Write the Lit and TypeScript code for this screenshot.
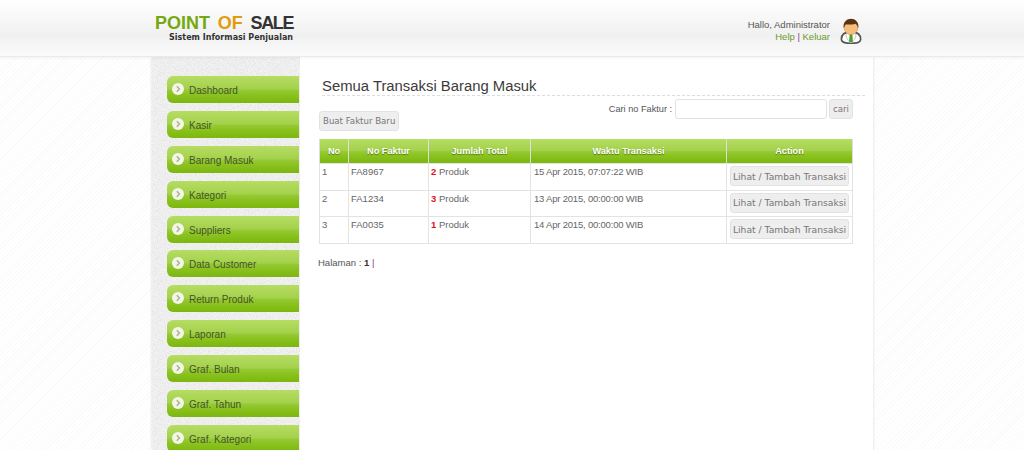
import { LitElement, css, html, unsafeCSS } from "lit";
import { customElement } from "lit/decorators.js";

const menu = ["Dashboard", "Kasir", "Barang Masuk", "Kategori", "Suppliers", "Data Customer", "Return Produk", "Laporan", "Graf. Bulan", "Graf. Tahun", "Graf. Kategori"];

const rows = [
  { no: 1, faktur: "FA8967", total: 2, waktu: "15 Apr 2015, 07:07:22 WIB" },
  { no: 2, faktur: "FA1234", total: 3, waktu: "13 Apr 2015, 00:00:00 WIB" },
  { no: 3, faktur: "FA0035", total: 1, waktu: "14 Apr 2015, 00:00:00 WIB" },
];

const noise = unsafeCSS(
  `url("data:image/svg+xml,%3Csvg xmlns='http://www.w3.org/2000/svg' width='160' height='160'%3E%3Cfilter id='n'%3E%3CfeTurbulence type='fractalNoise' baseFrequency='1.1' numOctaves='2'/%3E%3CfeColorMatrix values='0 0 0 0 0.6 0 0 0 0 0.6 0 0 0 0 0.6 0.9 0 0 0 -0.3'/%3E%3C/filter%3E%3Crect width='160' height='160' fill='%23f4f4f4'/%3E%3Crect width='160' height='160' filter='url(%23n)'/%3E%3C/svg%3E")`
);

@customElement("app-root")
export class AppRoot extends LitElement {
  static styles = css`
    :host {
      display: block;
      height: 450px;
      overflow: hidden;
      font-family: "Liberation Sans", Arial, sans-serif;
      font-size: 9.5px;
      color: #666;
      background: repeating-linear-gradient(135deg, #fff 0 2px, #fafafa 2px 3px);
    }
    .header {
      height: 57px;
      box-sizing: border-box;
      padding: 0 162px 0 155px;
      display: flex;
      justify-content: space-between;
      background: linear-gradient(#fff 0, #f2f2f2 55%, #f0f0f0 62%, #fbfbfb 100%);
      border-bottom: 1px solid #eaeaea;
      box-shadow: 0 1px 3px rgba(0, 0, 0, 0.05);
      position: relative;
    }
    .logo {
      padding-top: 14px;
      width: 138px;
    }
    .logo-main {
      font: bold 18px/19px "Liberation Sans", Arial, sans-serif;
      white-space: nowrap;
      display: flex;
      justify-content: space-between;
      color: #333;
    }
    .logo-main .point { color: #74a90f; }
    .logo-main .of { color: #e09c0c; }
    .logo-main .sale { letter-spacing: -1.4px; }
    .logo-sub {
      font: bold 8px/9px "DejaVu Sans", sans-serif;
      color: #333;
      text-align: right;
      white-space: nowrap;
    }
    .user {
      display: flex;
      gap: 10px;
      padding-top: 18px;
    }
    .user-text {
      text-align: right;
      line-height: 12px;
      padding-top: 1px;
      color: #555;
    }
    .user-text a { color: #6d9a2c; }
    .user-text .sep { color: #8a3f8a; }
    .user svg { display: block; }
    .wrap {
      width: 721px;
      margin-left: 152px;
      display: flex;
      height: 393px;
      box-shadow: 0 0 3px rgba(0, 0, 0, 0.14);
    }
    .sidebar {
      width: 148px;
      box-sizing: border-box;
      padding: 19px 0 0 15px;
      display: flex;
      flex-direction: column;
      gap: 7.9px;
      flex: none;
      background: #efefef ${noise};
    }
    .item {
      height: 27px;
      box-sizing: border-box;
      padding: 2px 0 0 5px;
      flex: none;
      display: flex;
      align-items: center;
      gap: 5px;
      margin-right: 1px;
      border-radius: 6px 0 0 6px;
      background: linear-gradient(#b6dd62 0, #a4d14c 48%, #96ca36 52%, #8ac21f 70%, #7cb60f 100%);
      color: #46532c;
      font-size: 10px;
    }
    .item svg { display: block; margin-top: -3px; }
    .content {
      flex: 1;
      background: #fff;
      padding: 19px 20px 0 19px;
      min-width: 0;
    }
    h1 {
      margin: 0 -12px 0 3px;
      padding-top: 2px;
      font: normal 14.85px/17px "Liberation Sans", Arial, sans-serif;
      color: #3b3b3b;
      border-bottom: 1px dashed #ddd;
    }
    .tools {
      display: flex;
      justify-content: space-between;
      height: 40px;
      margin-top: 3px;
    }
    .new-btn { margin-top: 12px; }
    .btn {
      box-sizing: border-box;
      height: 20px;
      padding: 0 3px;
      display: inline-flex;
      align-items: center;
      background: #eee;
      border: 1px solid #e2e2e2;
      border-radius: 3px;
      font: 8.6px "DejaVu Sans", sans-serif;
      color: #777;
      white-space: nowrap;
    }
    .search {
      display: flex;
      align-items: flex-start;
      gap: 2px;
    }
    .search label { line-height: 20px; font-size: 9.2px; margin-right: 1px; color: #555; }
    .search .input {
      box-sizing: border-box;
      width: 152px;
      height: 20px;
      border: 1px solid #e2e2e2;
      border-radius: 3px;
      background: #fff;
    }
    table {
      width: 533px;
      table-layout: fixed;
      border-collapse: collapse;
    }
    th {
      height: 24px;
      padding: 0;
      border: 1px solid #ddd;
      border-width: 0 1px;
      background: linear-gradient(#b6dd62 0, #a4d14c 48%, #96ca36 52%, #8ac21f 70%, #7cb60f 100%);
      color: #fff;
      font: bold 9.2px "Liberation Sans", Arial, sans-serif;
      text-shadow: 0 1px 1px rgba(60, 90, 0, 0.7);
      text-align: center;
    }
    td {
      height: 26.5px;
      box-sizing: border-box;
      padding: 0 2px;
      border: 1px solid #e3e3e3;
      vertical-align: top;
      line-height: 15px;
    }
    td b { color: #e0141c; }
    td.date { letter-spacing: -0.2px; padding-left: 3px; }
    td.action { padding: 2px 3px 0 3px; }
    td.action .btn { width: 119px; justify-content: center; padding: 0; font-size: 9.2px; }
    .pager { margin: 13px 0 0 -1px; color: #555; }
    .pager b { color: #333; }
    .pager span { color: #8a3f8a; }
  `;

  render() {
    return html`
      <div class="header">
        <div class="logo">
          <div class="logo-main"><span class="point">POINT</span><span class="of">OF</span><span class="sale">SALE</span></div>
          <div class="logo-sub">Sistem Informasi Penjualan</div>
        </div>
        <div class="user">
          <div class="user-text">
            <div>Hallo, Administrator</div>
            <div><a>Help</a> <span class="sep">|</span> <a>Keluar</a></div>
          </div>
          <svg width="22" height="26" viewBox="0 0 24 28">
            <path d="M1.5 23c0-5 4-8 10.5-8s10.5 3 10.5 8c0 3-4 4.5-10.5 4.5S1.5 26 1.5 23z" fill="#fff" stroke="#555" stroke-width="1.8"/>
            <path d="M7.5 15.500l4.500 2 4.500-2 1 4c-1 3-3 6-5.500 7.500-2.500-1.500-4.500-4.500-5.500-7.500z" fill="#fff" stroke="#999" stroke-width=".6"/>
            <path d="M10.5 17h3l.5 9h-4z" fill="#49a32a"/>
            <ellipse cx="12" cy="10" rx="7.5" ry="8" fill="#f8bd78" stroke="#c88440" stroke-width=".6"/>
            <path d="M4.2 11C2.5 4 8 .5 12 .5s9.5 3.5 7.8 10.5c-.5-2.5-1.500-4-3-5C13 7.500 8 7 6.500 6.500 5.500 7.500 4.700 9 4.200 11z" fill="#5a3410"/>
          </svg>
        </div>
      </div>
      <div class="wrap">
        <div class="sidebar">
          ${menu.map(
            (m) => html`<div class="item">
              <svg width="12" height="12" viewBox="0 0 12 12">
                <circle cx="6" cy="6" r="6" fill="#f3f5e6"/>
                <path d="M4.8 3.3L7.4 6 4.8 8.7" fill="none" stroke="#a9b58c" stroke-width="1.5"/>
              </svg>
              ${m}
            </div>`
          )}
        </div>
        <div class="content">
          <h1>Semua Transaksi Barang Masuk</h1>
          <div class="tools">
            <div class="new-btn"><span class="btn">Buat Faktur Baru</span></div>
            <div class="search">
              <label>Cari no Faktur :</label>
              <div class="input"></div>
              <span class="btn">cari</span>
            </div>
          </div>
          <table>
            <colgroup>
              <col style="width:29px" /><col style="width:80px" /><col style="width:102px" /><col style="width:196px" /><col style="width:126px" />
            </colgroup>
            <thead>
              <tr><th>No</th><th>No Faktur</th><th>Jumlah Total</th><th>Waktu Transaksi</th><th>Action</th></tr>
            </thead>
            <tbody>
              ${rows.map(
                (r) => html`<tr>
                  <td>${r.no}</td>
                  <td>${r.faktur}</td>
                  <td><b>${r.total}</b> Produk</td>
                  <td class="date">${r.waktu}</td>
                  <td class="action"><span class="btn">Lihat / Tambah Transaksi</span></td>
                </tr>`
              )}
            </tbody>
          </table>
          <div class="pager">Halaman : <b>1</b> <span>|</span></div>
        </div>
      </div>
    `;
  }
}
